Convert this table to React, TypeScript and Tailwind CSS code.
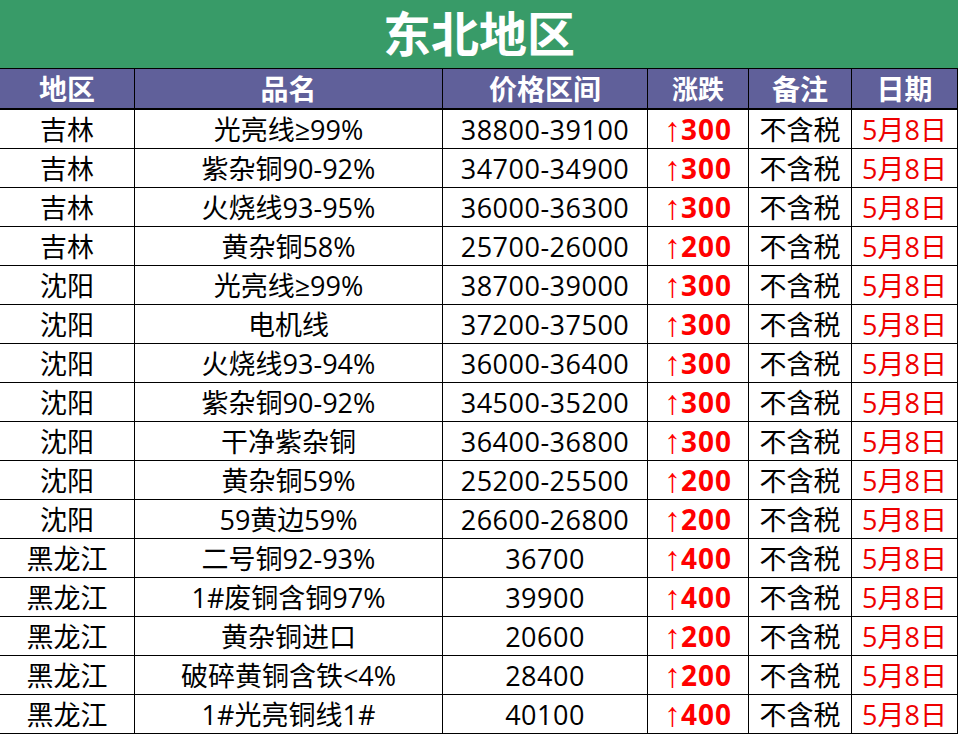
import React from "react";

type Row = { region: string; name: string; price: string; up: string; note: string; date: string };

const rows: Row[] = [
  { region: "吉林", name: "光亮线≥99%", price: "38800-39100", up: "300", note: "不含税", date: "5月8日" },
  { region: "吉林", name: "紫杂铜90-92%", price: "34700-34900", up: "300", note: "不含税", date: "5月8日" },
  { region: "吉林", name: "火烧线93-95%", price: "36000-36300", up: "300", note: "不含税", date: "5月8日" },
  { region: "吉林", name: "黄杂铜58%", price: "25700-26000", up: "200", note: "不含税", date: "5月8日" },
  { region: "沈阳", name: "光亮线≥99%", price: "38700-39000", up: "300", note: "不含税", date: "5月8日" },
  { region: "沈阳", name: "电机线", price: "37200-37500", up: "300", note: "不含税", date: "5月8日" },
  { region: "沈阳", name: "火烧线93-94%", price: "36000-36400", up: "300", note: "不含税", date: "5月8日" },
  { region: "沈阳", name: "紫杂铜90-92%", price: "34500-35200", up: "300", note: "不含税", date: "5月8日" },
  { region: "沈阳", name: "干净紫杂铜", price: "36400-36800", up: "300", note: "不含税", date: "5月8日" },
  { region: "沈阳", name: "黄杂铜59%", price: "25200-25500", up: "200", note: "不含税", date: "5月8日" },
  { region: "沈阳", name: "59黄边59%", price: "26600-26800", up: "200", note: "不含税", date: "5月8日" },
  { region: "黑龙江", name: "二号铜92-93%", price: "36700", up: "400", note: "不含税", date: "5月8日" },
  { region: "黑龙江", name: "1#废铜含铜97%", price: "39900", up: "400", note: "不含税", date: "5月8日" },
  { region: "黑龙江", name: "黄杂铜进口", price: "20600", up: "200", note: "不含税", date: "5月8日" },
  { region: "黑龙江", name: "破碎黄铜含铁<4%", price: "28400", up: "200", note: "不含税", date: "5月8日" },
  { region: "黑龙江", name: "1#光亮铜线1#", price: "40100", up: "400", note: "不含税", date: "5月8日" },
];

const grid = "grid grid-cols-[135px_308px_205px_101px_103px_106px]";
const cell = "flex items-center justify-center border-r border-black whitespace-nowrap";

export default function App() {
  return (
    <div
      className="w-[958px] h-[735px] bg-white flex flex-col overflow-hidden"
      style={{ fontFamily: '"Open Sans", "Noto Sans CJK SC", sans-serif' }}
    >
      <div className="h-[69px] shrink-0 bg-[#389b68] border-b border-black flex items-center justify-center text-white text-[48px] font-bold leading-none">
        东北地区
      </div>
      <div className={`${grid} h-[41px] shrink-0 bg-[#60609a] border-b-2 border-black text-white text-[28px] font-bold leading-none`}>
        <div className={cell}>地区</div>
        <div className={cell}>品名</div>
        <div className={cell}>价格区间</div>
        <div className={`${cell} text-[26px]`}>涨跌</div>
        <div className={cell}>备注</div>
        <div className={cell}>日期</div>
      </div>
      {rows.map((r, i) => (
        <div key={i} className={`${grid} h-[39px] shrink-0 border-b border-black text-[27px] leading-none text-black`}>
          <div className={cell}>{r.region}</div>
          <div className={cell}>{r.name}</div>
          <div className={`${cell} tracking-[0.5px]`}>{r.price}</div>
          <div className={`${cell} text-[#ff0000]`}>
            <span
              className="font-normal text-[34px] leading-none"
              style={{ fontFamily: '"Liberation Sans", sans-serif' }}
            >
              ↑
            </span>
            <span className="font-bold text-[28px] tracking-[1px]">{r.up}</span>
          </div>
          <div className={cell}>{r.note}</div>
          <div className={`${cell} text-[#ee0000]`}>{r.date}</div>
        </div>
      ))}
    </div>
  );
}
